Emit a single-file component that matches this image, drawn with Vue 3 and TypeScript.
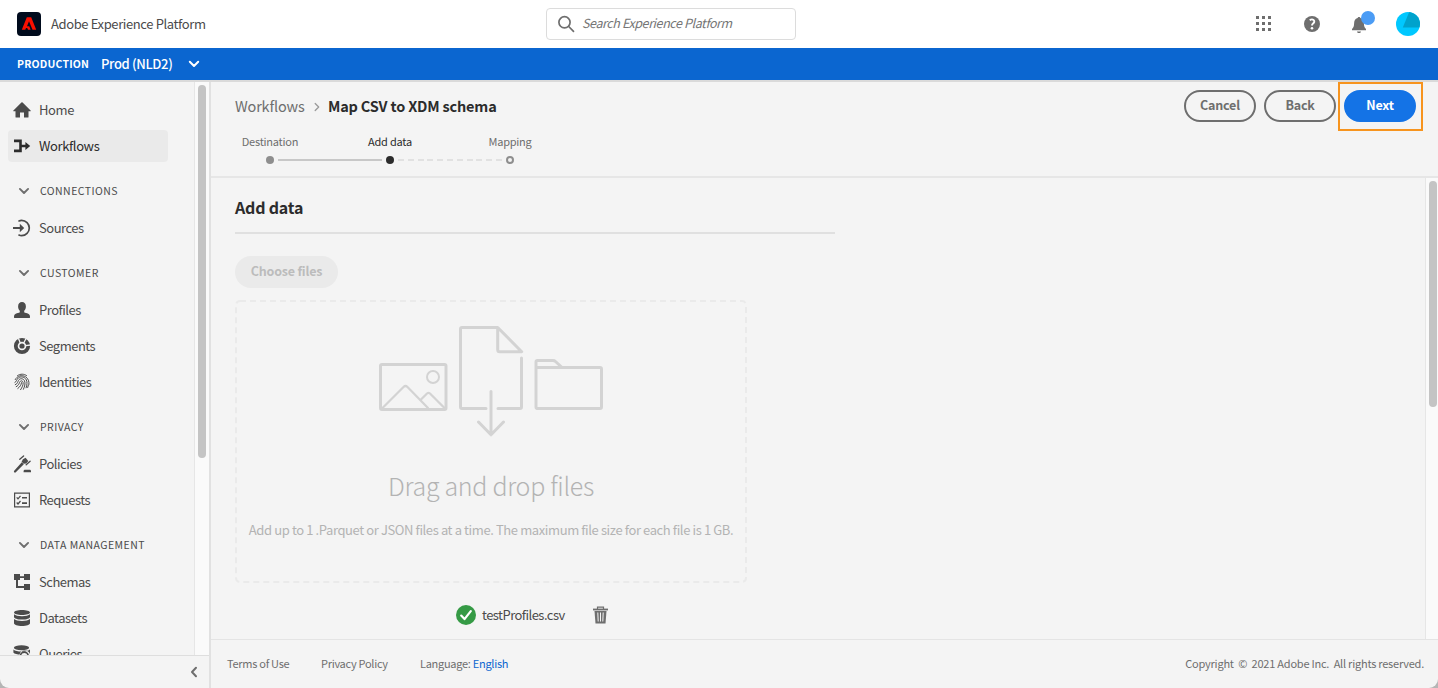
<script setup lang="ts">
interface NavItem {
  label: string
  icon: string
  active?: boolean
}
interface NavGroup {
  title?: string
  items: NavItem[]
}

const groups: NavGroup[] = [
  {
    items: [
      { label: 'Home', icon: 'home' },
      { label: 'Workflows', icon: 'workflow', active: true },
    ],
  },
  { title: 'CONNECTIONS', items: [{ label: 'Sources', icon: 'source' }] },
  {
    title: 'CUSTOMER',
    items: [
      { label: 'Profiles', icon: 'profile' },
      { label: 'Segments', icon: 'segment' },
      { label: 'Identities', icon: 'identity' },
    ],
  },
  {
    title: 'PRIVACY',
    items: [
      { label: 'Policies', icon: 'policy' },
      { label: 'Requests', icon: 'request' },
    ],
  },
  {
    title: 'DATA MANAGEMENT',
    items: [
      { label: 'Schemas', icon: 'schema' },
      { label: 'Datasets', icon: 'dataset' },
      { label: 'Queries', icon: 'query' },
    ],
  },
]

const steps = [
  { label: 'Destination', state: 'done' },
  { label: 'Add data', state: 'current' },
  { label: 'Mapping', state: 'todo' },
]
</script>

<template>
  <div class="app">
    <header class="top">
      <svg class="logo" width="24" height="24" viewBox="0 0 24 24">
        <rect width="24" height="24" rx="4" fill="#000b1d" />
        <path fill="#fa0f00" d="M9.8 5.200h4.400l5 12.600h-3.700L12 9.300l-2 5h2.300l1.300 3.500h-2.500l-.9-1.900H9l-.7 1.900H4.800z" />
      </svg>
      <span class="brand">Adobe Experience Platform</span>
      <div class="search">
        <svg width="18" height="18" viewBox="0 0 18 18" fill="none" stroke="#6e6e6e" stroke-width="1.700" stroke-linecap="round">
          <circle cx="7.500" cy="7.300" r="5.600" /><path d="M11.700 11.500l4.800 4.800" />
        </svg>
        <span>Search Experience Platform</span>
      </div>
      <div class="tools">
        <svg class="grid" width="16" height="16" viewBox="0 0 16 16" fill="#6e6e6e">
          <path d="M0 0h3v3H0zM6 0h3v3H6zM12 0h3v3h-3zM0 6h3v3H0zM6 6h3v3H6zM12 6h3v3h-3zM0 12h3v3H0zM6 12h3v3H6zM12 12h3v3h-3z" />
        </svg>
        <svg class="help" width="16" height="16" viewBox="0 0 16 16">
          <circle cx="8" cy="8" r="8" fill="#6e6e6e" />
          <path d="M5.700 4.100Q8 2.800 9.500 3.900c1.400 1.200.8 2.600-.4 3.500-.8.600-1.100 1-1.100 2" fill="none" stroke="#fff" stroke-width="1.900" />
          <circle cx="8" cy="12.200" r="1.300" fill="#fff" />
        </svg>
        <svg class="bell" width="26" height="24" viewBox="0 0 26 24">
          <path fill="#6e6e6e" d="M8 5c.8 0 1.300.4 1.400 1.100 2.600.7 3.400 2.700 3.500 5.400.1 3 .8 4.300 2.100 5.500v1.200H1V17c1.300-1.200 2-2.500 2.100-5.500.1-2.700.9-4.700 3.500-5.400C6.700 5.400 7.200 5 8 5zM6 19.400h4c-.2 1-.9 1.700-2 1.700s-1.800-.7-2-1.700z" />
          <circle cx="17" cy="6" r="7" fill="#4b9cf5" />
        </svg>
        <svg class="avatar" width="24" height="24" viewBox="0 0 24 24">
          <defs><clipPath id="face"><circle cx="12" cy="12" r="12" /></clipPath></defs>
          <g clip-path="url(#face)">
            <rect width="24" height="24" fill="#00c8ff" />
            <path d="M13.200 0H24v15.500H6.800z" fill="#00a2cc" />
          </g>
        </svg>
      </div>
    </header>

    <div class="sandbox">
      <b>PRODUCTION</b>
      <span>Prod (NLD2)</span>
      <svg width="12" height="8" viewBox="0 0 12 8" fill="none" stroke="#fff" stroke-width="2" stroke-linecap="round" stroke-linejoin="round"><path d="M1.800 1.800L6 6l4.200-4.200" /></svg>
    </div>

    <div class="body">
      <aside class="side">
        <div class="scroller">
          <nav>
            <div v-for="(group, g) in groups" :key="g" class="group">
              <div v-if="group.title" class="heading">
                <svg width="12" height="8" viewBox="0 0 12 8" fill="none" stroke="#6e6e6e" stroke-width="1.900" stroke-linecap="round" stroke-linejoin="round"><path d="M1.900 1.900L6 6l4.100-4.100" /></svg>
                <span>{{ group.title }}</span>
              </div>
              <div v-for="item in group.items" :key="item.label" class="item" :class="[item.icon, { active: item.active }]">
                <svg width="18" height="18" viewBox="0 0 18 18" fill="currentColor">
                  <path v-if="item.icon === 'home'" d="M9 1.300a.8.800 0 0 1 .6.200l8 8a.45.450 0 0 1-.3.800H15.500v5.700a.6.600 0 0 1-.6.600H11v-5.100H7v5.100H3.100a.6.600 0 0 1-.6-.6v-5.700H.7a.45.450 0 0 1-.3-.8l8-8A.8.800 0 0 1 9 1.300z" />
                  <path v-else-if="item.icon === 'workflow'" d="M1 2.600h7.800v5.100h3.600V5L17.200 9l-4.800 4v-2.700H8.800v5H1v-2.700h5.200V5.300H1z" />
                  <g v-else-if="item.icon === 'source'">
                    <path d="M0 7.900h6.800V4.800L11.200 9l-4.400 4.200v-3.100H0z" />
                    <path d="M6 1.900c1-.5 1.700-.6 2.600-.6a7.700 7.700 0 0 1 0 15.400c-.9 0-1.600-.1-2.600-.6" fill="none" stroke="currentColor" stroke-width="1.700" stroke-linecap="round" />
                  </g>
                  <path v-else-if="item.icon === 'profile'" d="M9 1c2.400 0 3.900 1.700 3.900 4.400 0 1.700-.7 3.300-1.700 4.300v1.200c0 .5.3.8.8.9 3.200.6 5 1.700 5 3.600v1.200c0 .3-.2.400-.4.400H1.400c-.3 0-.4-.2-.4-.4v-1.200c0-1.900 1.800-3 5-3.600.5-.1.800-.4.800-.9V9.700C5.800 8.700 5.100 7.100 5.100 5.400 5.100 2.700 6.600 1 9 1z" />
                  <g v-else-if="item.icon === 'segment'" fill="none" stroke="currentColor">
                    <circle cx="9" cy="9" r="6.200" stroke-width="3.800" />
                    <circle cx="9" cy="9" r="2.600" fill="currentColor" stroke="none" />
                    <path d="M10.600 6.200L13 1.500M12.300 8.700l5.400-.7M7.300 6L5.400 1.200" stroke="#f4f4f4" stroke-width="1.300" />
                  </g>
                  <g v-else-if="item.icon === 'identity'" fill="none" stroke="currentColor" stroke-width="1" stroke-linecap="round">
                    <path d="M4.500 2.600C7.500.6 11 .7 13.600 2.600M2.200 6.600C4.300 2.600 9 1.600 12.600 3.800c2.800 1.800 3.700 4.800 3.300 7.800M1.900 9.500c1.900-.8 1.400-3.100 3.500-4.600 2.700-1.900 6.400-.9 7.900 1.900 1.100 2.200.8 5.200-.2 8M2.300 11.700c3-1.200 2.100-3.300 3.700-5 1.700-1.700 4.500-1.100 5.500 1.100 1.100 2.500.2 5.700-1.100 8.500M3.200 13.700c3.200-1.500 2.800-4.200 4.200-5.500 1.100-.9 2.500-.1 2.700 1.300.3 2.300-1 5-2.500 7.200M4.800 15.500C7.200 13.600 8.200 12 8.500 9.700M14.700 14.500l.6-2.200" />
                  </g>
                  <g v-else-if="item.icon === 'policy'">
                    <path d="M8.800 7.200l2 2.100-8 8c-.5.500-1.100.5-1.600 0s-.5-1 0-1.500z" />
                    <path d="M9.900 4.300l2.700-1.500 2.700 3.100-2.100 2.500-2.600.3-2-2z" />
                    <path d="M6.800 4.300L10.600.9M13.200 9.800l3.900-3.600" stroke="currentColor" stroke-width="1.300" stroke-linecap="round" />
                    <path d="M12 14.700h4.600c.8 0 1.400.6 1.400 1.300v1.300h-7.400V16c0-.7.6-1.300 1.400-1.300z" />
                  </g>
                  <g v-else-if="item.icon === 'request'">
                    <path d="M1.600 2.100h14.800v13.800H1.600z" fill="none" stroke="currentColor" stroke-width="1.200" />
                    <path d="M3.700 6.300l1.300 1.500 2.500-3M3.700 11.500L5 13l2.500-3" fill="none" stroke="currentColor" stroke-width="1.200" />
                    <path d="M9 5.900h5v1.700H9zM9 11.300h5V13H9z" />
                  </g>
                  <path v-else-if="item.icon === 'schema'" d="M1 1h6v2.200h4V1h6v6h-6V5H7v2H5v5.900h6V11h6v6h-6v-2.100H3V7H1z" />
                  <g v-else-if="item.icon === 'dataset'">
                    <path d="M9 1c4.400 0 8 1.100 8 2.500S13.400 6 9 6 1 4.900 1 3.500 4.600 1 9 1z" />
                    <path d="M1 5.300C2.400 6.600 5.400 7.200 9 7.200s6.600-.6 8-1.900V8c0 1.400-3.600 2.600-8 2.600S1 9.400 1 8z" />
                    <path d="M1 10c1.400 1.300 4.400 1.900 8 1.900s6.600-.6 8-1.900v4.200c0 1.500-3.600 2.800-8 2.800s-8-1.300-8-2.800z" />
                  </g>
                  <g v-else>
                    <ellipse cx="8.500" cy="2.700" rx="7.600" ry="2.500" />
                    <path d="M.4 4.500C2 6 5 6.600 8.500 6.600S15 6 17 4.500v4.600a5.500 5.500 0 0 0-10.500.4C3.400 9.300.4 8.300.4 7.200z" />
                    <circle cx="11.300" cy="11" r="3.900" fill="none" stroke="currentColor" stroke-width="1.600" />
                  </g>
                </svg>
                <span>{{ item.label }}</span>
              </div>
            </div>
          </nav>
          <div class="track"><i class="thumb" /></div>
        </div>
        <div class="collapse">
          <svg width="8" height="12" viewBox="0 0 8 12" fill="none" stroke="#6e6e6e" stroke-width="2" stroke-linecap="round" stroke-linejoin="round"><path d="M6 1.800L2 6l4 4.200" /></svg>
        </div>
      </aside>

      <section class="main">
        <div class="bar">
          <div class="crumbs">
            <span>Workflows</span>
            <svg width="6" height="10" viewBox="0 0 6 10" fill="none" stroke="#9a9a9a" stroke-width="1.300" stroke-linecap="round" stroke-linejoin="round"><path d="M1.200 1.500L4.700 5 1.200 8.500" /></svg>
            <strong>Map CSV to XDM schema</strong>
          </div>
          <div class="actions">
            <button>Cancel</button>
            <button>Back</button>
            <div class="focus"><button class="cta">Next</button></div>
          </div>
          <ol class="steps">
            <li v-for="step in steps" :key="step.label" :class="step.state">
              <span>{{ step.label }}</span><i class="dot" />
            </li>
          </ol>
        </div>

        <div class="view">
          <div class="content">
            <h2>Add data</h2>
            <button class="choose" disabled>Choose files</button>
            <div class="drop">
              <svg class="outline" width="512" height="283" viewBox="0 0 512 283">
                <rect x="1" y="1" width="510" height="281" rx="4" fill="none" stroke="#eaeaea" stroke-width="2" stroke-dasharray="6 4" />
              </svg>
              <svg class="art" width="226" height="112" viewBox="0 0 226 112" fill="none" stroke="#d3d3d3" stroke-width="3" stroke-linecap="round" stroke-linejoin="round">
                <rect x="2.500" y="39.500" width="65.500" height="45" rx="1.500" />
                <circle cx="55" cy="52" r="6" stroke-width="2" />
                <path d="M4 83.500L25.500 62q2-2 4 0L50 83M42.500 75l6.500-6.500q1.500-1.200 3 0L67 83.500" stroke-width="2.200" />
                <path d="M108 83.500H84q-1.500 0-1.500-1.500V4q0-1.500 1.500-1.500h35.700l24 24.200h-22q-2 0-2-2V3M143.500 33v49q0 1.500-1.500 1.500H120M113 66.500v43M100.500 97l12.500 12.800L125.500 97" />
                <path d="M159.500 83.500q-1.500 0-1.500-1.500V37q0-1.500 1.500-1.500H175q1.500 0 2.500 1l6.500 6M159 42.500h63q1.500 0 1.500 1.500v38q0 1.500-1.500 1.500H159" />
              </svg>
              <h1>Drag and drop files</h1>
              <p>Add up to 1 .Parquet or JSON files at a time. The maximum file size for each file is 1 GB.</p>
            </div>
            <div class="file">
              <svg width="20" height="20" viewBox="0 0 20 20"><circle cx="10" cy="10" r="10" fill="#359a45" /><path d="M5.200 10.600l3.300 3.500 6.300-8" fill="none" stroke="#fff" stroke-width="2.200" stroke-linecap="round" stroke-linejoin="round" /></svg>
              <span>testProfiles.csv</span>
              <svg class="trash" width="16" height="18" viewBox="0 0 16 18" fill="none" stroke="#6e6e6e">
                <path d="M0 3.500h15" stroke-width="1.800" /><path d="M4.500 3V1.200h6V3" stroke-width="1.200" />
                <path d="M1.500 5h12l-1 12.500h-10z" fill="#6e6e6e" stroke="none" />
                <path d="M4.800 6.500l.4 9M7.500 6.500v9M10.200 6.500l-.4 9" stroke="#f4f4f4" stroke-width="1" />
              </svg>
            </div>
          </div>
          <div class="track right"><i class="thumb" /></div>
        </div>

        <footer>
          <span class="terms">Terms of Use</span>
          <span class="policy-link">Privacy Policy</span>
          <span class="lang">Language: <a>English</a></span>
          <span class="copy">Copyright &nbsp;© &nbsp;2021 Adobe Inc. &nbsp;All rights reserved.</span>
        </footer>
      </section>
    </div>
  </div>
</template>

<style>
body {
  margin: 0;
  background: #b5b5b5;
}
</style>

<style scoped>
* {
  box-sizing: border-box;
}
.app {
  width: 1438px;
  height: 688px;
  display: flex;
  flex-direction: column;
  overflow: hidden;
  border-radius: 0 0 9px 9px;
  background: #f4f4f4;
  color: #4b4b4b;
  font: 13px/20px "Noto Sans CJK SC", "Noto Sans", sans-serif;
  letter-spacing: -0.5px;
  white-space: nowrap;
}
svg {
  display: block;
  flex: none;
}
.top {
  flex: none;
  height: 48px;
  display: flex;
  align-items: center;
  padding: 0 18px 0 17px;
  background: #fff;
}
.brand {
  width: 495px;
  margin-left: 10px;
  letter-spacing: -0.38px;
}
.search {
  width: 250px;
  height: 32px;
  display: flex;
  align-items: center;
  gap: 7px;
  padding-left: 10px;
  border: 1px solid #dcdcdc;
  border-radius: 4px;
  color: #757575;
  font-size: 12.5px;
  letter-spacing: -0.4px;
  font-style: italic;
}
.search span {
  padding-bottom: 2px;
}
.tools {
  margin-left: auto;
  display: flex;
  align-items: center;
}
.help {
  margin-left: 32px;
}
.bell {
  margin: -1px 19px 0 31px;
  overflow: visible;
}
.sandbox {
  flex: none;
  height: 32px;
  display: flex;
  align-items: center;
  padding-left: 17px;
  background: #0b66d0;
  color: #fff;
}
.sandbox b {
  width: 84px;
  font-size: 10.5px;
  letter-spacing: 0.18px;
}
.sandbox span {
  width: 87px;
  font-weight: 500;
  letter-spacing: -0.35px;
}
.body {
  flex: 1;
  min-height: 0;
  display: flex;
  border-top: 2px solid #dadada;
}
.side {
  flex: none;
  width: 211px;
  display: flex;
  flex-direction: column;
  border-right: 2px solid #e1e1e1;
}
.scroller {
  flex: 1;
  min-height: 0;
  display: flex;
  overflow: hidden;
}
nav {
  width: 194px;
  padding: 12px 0 0 8px;
}
.heading {
  height: 50px;
  display: flex;
  align-items: center;
  gap: 10px;
  padding: 8px 0 0 10px;
  font-size: 10.5px;
  letter-spacing: 0.45px;
}
.heading span {
  padding-bottom: 1px;
}
.item {
  width: 160px;
  height: 32px;
  display: flex;
  align-items: center;
  gap: 8px;
  padding-left: 5px;
  border-radius: 4px;
}
.item + .item {
  margin-top: 4px;
}
.home,
.workflow {
  letter-spacing: -0.38px;
}
.active {
  background: #eaeaea;
  color: #2c2c2c;
}
.track {
  width: 15px;
  padding: 3px 3px 0;
  border-left: 1px solid #e6e6e6;
  background: #fafafa;
}
.thumb {
  display: block;
  width: 8px;
  height: 373px;
  border-radius: 4px;
  background: #c4c4c4;
}
.collapse {
  flex: none;
  height: 33px;
  display: flex;
  align-items: center;
  justify-content: flex-end;
  padding-right: 11px;
  border-top: 1px solid #dedede;
}
.main {
  flex: 1;
  min-width: 0;
  display: flex;
  flex-direction: column;
}
.bar {
  flex: none;
  height: 96px;
  display: grid;
  grid-template: 50px 44px / 1fr auto;
  border-bottom: 2px solid #e6e6e6;
}
.crumbs {
  display: flex;
  align-items: center;
  padding-left: 24px;
  font-size: 14.5px;
  letter-spacing: -0.18px;
  color: #6e6e6e;
}
.crumbs span {
  width: 79px;
  padding-bottom: 2px;
}
.crumbs strong {
  margin-left: 8px;
  padding-bottom: 2px;
  color: #2c2c2c;
}
.actions {
  display: flex;
  align-items: flex-start;
  gap: 8px;
  padding: 8px 22px 0 0;
}
button {
  width: 72px;
  height: 32px;
  padding: 0 0 2px;
  border: 2px solid #6e6e6e;
  border-radius: 16px;
  background: none;
  color: #6e6e6e;
  font: bold 12.5px/18px "Noto Sans CJK SC", "Noto Sans", sans-serif;
  letter-spacing: -0.2px;
}
.focus {
  position: relative;
  width: 72px;
  height: 32px;
}
.focus::after {
  content: "";
  position: absolute;
  inset: -8px -7px -9px -6px;
  border: 2px solid #f7941e;
}
.cta {
  border-color: #1473e6;
  background: #1473e6;
  color: #fff;
}
.steps {
  display: flex;
  margin: 0 0 0 -1px;
  padding: 0;
  list-style: none;
  font-size: 11px;
  letter-spacing: -0.24px;
  line-height: 18px;
  color: #6e6e6e;
}
.steps li {
  position: relative;
  width: 120px;
  display: flex;
  flex-direction: column;
  align-items: center;
}
.dot {
  width: 8px;
  height: 8px;
  margin-top: 6px;
  border-radius: 50%;
  background: #8e8e8e;
}
.current {
  color: #2c2c2c;
}
.current .dot {
  background: #2c2c2c;
}
.todo .dot {
  border: 2px solid #8e8e8e;
  background: none;
}
.done::after,
.current::after {
  content: "";
  position: absolute;
  left: 68px;
  top: 27px;
  width: 104px;
  height: 2px;
  background: #c8c8c8;
}
.current::after {
  background: repeating-linear-gradient(90deg, #e1e1e1 0 6px, transparent 6px 9.8px);
}
.view {
  flex: 1;
  min-height: 0;
  display: flex;
}
.content {
  flex: 1;
  padding-left: 24px;
}
h2 {
  width: 600px;
  height: 56px;
  margin: 0 0 22px;
  padding-top: 19px;
  border-bottom: 2px solid #e0e0e0;
  font-size: 16px;
  letter-spacing: -0.2px;
  line-height: 20px;
  color: #2c2c2c;
}
.choose {
  display: block;
  width: 103px;
  border: 0;
  background: #eaeaea;
  color: #bcbcbc;
}
.drop {
  position: relative;
  width: 512px;
  height: 283px;
  margin-top: 12px;
  display: flex;
  flex-direction: column;
  align-items: center;
}
.outline {
  position: absolute;
  left: 0;
  top: 0;
}
.art {
  margin-top: 25px;
}
h1 {
  margin: 30px 0 0;
  font-size: 25px;
  letter-spacing: -0.3px;
  line-height: 36px;
  font-weight: 300;
  color: #b3b3b3;
}
.drop p {
  margin: 17px 0 0;
  letter-spacing: -0.395px;
  color: #b3b3b3;
}
.file {
  display: flex;
  align-items: center;
  margin: 22px 0 0 221px;
}
.file span {
  width: 117px;
  padding-left: 6px;
  letter-spacing: -0.54px;
}
.trash {
  margin-top: -1px;
}
.right {
  width: 13px;
}
.right .thumb {
  height: 226px;
}
footer {
  flex: none;
  height: 49px;
  display: flex;
  align-items: center;
  padding: 0 14px 2px 16px;
  border-top: 1px solid #e4e4e4;
  font-size: 11px;
  letter-spacing: -0.28px;
  color: #6e6e6e;
}
.terms {
  width: 94px;
}
.policy-link {
  width: 99px;
}
.lang a {
  color: #0d66d0;
}
.copy {
  margin-left: auto;
  letter-spacing: -0.23px;
}
</style>
